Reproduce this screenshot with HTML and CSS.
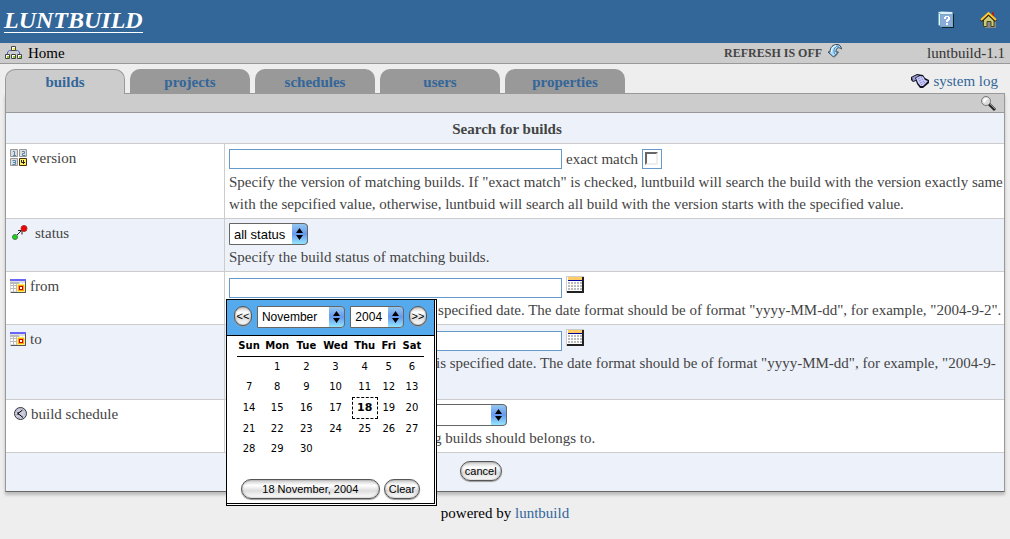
FILE: index.html
```html
<!DOCTYPE html>
<html lang="en">
<head>
<meta charset="utf-8">
<title>Luntbuild - Search for builds</title>
<link rel="stylesheet" href="styles.css">
</head>
<body>
<svg class="defs" aria-hidden="true">
  <symbol id="grid-cal" viewBox="0 0 16 14">
    <path fill="#ddd" d="M0 0h16v14H0z"/>
    <path fill="#fff" d="M1 4h2v2H1zM4 4h2v2H4zM7 4h2v2H7zM10 4h2v2h-2zM1 7h2v2H1zM4 7h2v2H4zM7 7h2v2H7zM1 10h2v2H1zM4 10h2v2H4zM13 4h2v2h-2z"/>
    <path fill="#bbb" d="M0 3h9v2H0zM3 5h1v8H3zM6 5h1v8H6zM0 6h6v1H0zM0 9h6v1H0zM0 13h16v1H0z"/>
    <path fill="#66f" d="M0 0h16v2H0z"/>
    <path fill="#555" d="M15 2h1v12h-1zM1 13h14v1H1z"/>
    <path fill="#fe6" d="M8 5h6l1 1v6l-1 1H8l-1-1V6z"/>
    <path fill="#fa0" d="M8 6h6v6H8z"/>
    <path fill="#c00" d="M9 7h4v4H9z"/>
    <path fill="#fff" d="M10 8h2v2h-2z"/>
  </symbol>
  <symbol id="picker-cal" viewBox="0 0 18 17">
    <path fill="#ccc" d="M0 0h18v17H0z"/>
    <path fill="#fff" d="M1 1h15v14H1z"/>
    <path fill="#fc6" d="M2 1h14v3H2z"/>
    <path fill="#009" d="M2 4h14v1H2z"/>
    <path fill="none" stroke="#bbb" stroke-width="2" stroke-dasharray="2 1" d="M2 7h14M2 10h14M2 13h14"/>
    <path fill="#222" d="M16 1h2v16H1v-2h15z"/>
  </symbol>
</svg>

<header class="banner">
  <a class="brand" href="#">LUNTBUILD</a>
  <nav class="banner-links">
    <a href="#" aria-label="Help">
      <svg width="18" height="18" viewBox="0 0 18 18">
        <path fill="#123" d="M15 3h2v14H5v-1h10z"/>
        <path fill="#7ab" d="M1 1l4-1 11 1v15H4l-3-2z"/>
        <path fill="#def" d="M2 1h13v2H4L2 2z"/>
        <path fill="#dff" d="M2 3h1v11H2z"/>
        <path fill="#8ad" d="M4 4h11v11H4z"/>
        <path fill="#fff" d="M7 6h1V5h4v1h1v3h-1v1h-1v1H9V9h1V8h1V6H9v2H7zM9 12h2v2H9z"/>
      </svg>
    </a>
    <a href="#" aria-label="Home page">
      <svg width="18" height="18" viewBox="0 0 18 18">
        <path fill="#888" d="M5 9h11v8H5z"/>
        <path fill="#a22" d="M12 1h2v5h-2z"/>
        <path fill="#cc7" stroke="#442" d="M3.500 8.500L8.500 4l5.500 4.500v7h-3v-5H7v5H3.500z"/>
        <path fill="none" stroke="#321" stroke-width="3" d="M1 10L8.500 3 16 10"/>
        <path fill="none" stroke="#fc3" stroke-width="2" d="M1 9L8.500 2 16 9"/>
      </svg>
    </a>
  </nav>
</header>

<div class="crumbs">
  <a class="crumb-home" href="#">
    <svg width="18" height="14" viewBox="0 0 18 14">
      <path fill="none" stroke="#46c" d="M2.500 8V6l2-1.500h8l2 1.500v2"/>
      <path fill="#fff" stroke="#444" d="M6.500 .500h4v4h-4zM.500 8.500h4v4h-4zM6.500 8.500h4v4h-4zM12.500 8.500h4v4h-4z"/>
      <path fill="#ee3" d="M8 2h2v2H8z"/>
      <path fill="#8c2" d="M2 10h2v2H2zM8 10h2v2H8zM14 10h2v2h-2z"/>
    </svg>
    Home
  </a>
  <a class="refresh" href="#">REFRESH IS OFF
    <svg width="16" height="16" viewBox="0 0 16 16">
      <path fill="#777" d="M7 14l4-4-2-2z"/>
      <path fill="#adf" stroke="#345" d="M1 8h2C3 3 6 .500 10 .500c3 0 4 2 4.500 4.500C12 3 9 3 9 8h2.500L6.500 13z"/>
      <path fill="none" stroke="#48b" d="M7.500 10C6 5 8 2 12 2"/>
      <path fill="none" stroke="#fff" d="M4.500 8c0-4 2-6 4.500-6"/>
    </svg>
  </a>
  <span class="release">luntbuild-1.1</span>
</div>

<main class="page">
  <div class="tab-row">
    <nav class="tabs">
      <a class="tab tab-active" href="#">builds</a>
      <a class="tab" href="#">projects</a>
      <a class="tab" href="#">schedules</a>
      <a class="tab" href="#">users</a>
      <a class="tab" href="#">properties</a>
    </nav>
    <a class="syslog" href="#">
      <svg width="18" height="15" viewBox="0 0 18 15">
        <path fill="#112" d="M0 3l6-3 6 1 2 3 4 2v3l-6 5H9l-3-4-1-3-3 1-2-2z"/>
        <path fill="#99c" d="M1 3.500L6 1l2 .500L4 4l1 2-3 1z"/>
        <path fill="#ccf" d="M5 4l4-2 3 .500L14 6l3 1-5 5H9.500L7 9z"/>
        <path fill="none" stroke="#88b" stroke-dasharray="2 1" d="M7 5l4-2M8 7l4-2M9 9l4-2M10 11l4-3"/>
      </svg>
      system log
    </a>
  </div>

  <section class="panel">
    <div class="toolbar">
      <button class="icon-button" type="button" aria-label="Search">
        <svg width="18" height="17" viewBox="0 0 18 17">
          <path stroke="#222" stroke-width="3" d="M9 9l6 6"/>
          <path stroke="#999" d="M10 9l5 5"/>
          <circle cx="6" cy="6" r="4.500" fill="#ddd" stroke="#777"/>
          <path fill="#fff" d="M3 5l2-2h3L6 6 4 8z"/>
        </svg>
      </button>
    </div>

    <form class="search">
      <table class="criteria">
        <colgroup><col class="names"><col></colgroup>
        <thead>
          <tr class="shade"><th colspan="2">Search for builds</th></tr>
        </thead>
        <tbody>
          <tr>
            <td>
              <label class="name" for="version">
                <svg width="18" height="18" viewBox="0 0 18 18">
                  <path fill="#ddd" stroke="#999" d="M.500 .500h7v7h-7zM9.500 .500h7v7h-7zM.500 9.500h7v7h-7z"/>
                  <path fill="#fe6" stroke="#431" d="M9.500 9.500h7v7h-7z"/>
                  <path fill="none" stroke="#58a" d="M3 2.500h1.500V6M3 6.500h3M12 2.500h2.500v2h-2v2h3M2.500 11.500h3v4h-3M3 13.500h2"/>
                  <path fill="none" stroke="#220" d="M11.500 11v2.500H15M13.500 11v4"/>
                </svg>
                version
              </label>
            </td>
            <td>
              <div class="field">
                <input class="text" id="version" type="text">
                <label for="exact">exact match</label>
                <span class="check"><input id="exact" type="checkbox"></span>
              </div>
              <p>Specify the version of matching builds. If "exact match" is checked, luntbuild will search the build with the version exactly same with the sepcified value, otherwise, luntbuid will search all build with the version starts with the specified value.</p>
            </td>
          </tr>
          <tr class="shade">
            <td>
              <label class="name" for="status">
                <svg width="21" height="18" viewBox="0 0 21 18">
                  <path fill="none" stroke="#222" d="M7 11l5-5M8 6.500h4v4"/>
                  <circle cx="5" cy="13" r="2.500" fill="#1d1" stroke="#575"/>
                  <circle cx="14" cy="4.500" r="3" fill="#e00" stroke="#a33"/>
                </svg>
                status
              </label>
            </td>
            <td>
              <div class="field">
                <select class="drop" id="status"><option>all status</option></select>
              </div>
              <p>Specify the build status of matching builds.</p>
            </td>
          </tr>
          <tr>
            <td>
              <label class="name" for="from">
                <svg width="16" height="14"><use href="#grid-cal"/></svg>
                from
              </label>
            </td>
            <td>
              <div class="field field-date">
                <input class="text" id="from" type="text">
                <button class="icon-button" type="button" aria-label="Pick start date"><svg width="18" height="17"><use href="#picker-cal"/></svg></button>
                <div class="calendar">
                  <div class="calendar-body">
                    <div class="calendar-head">
                      <button class="pill pill-round" type="button">&lt;&lt;</button>
                      <select class="drop drop-month" aria-label="Month"><option>November</option></select>
                      <select class="drop drop-year" aria-label="Year"><option>2004</option></select>
                      <button class="pill pill-round" type="button">&gt;&gt;</button>
                    </div>
                    <table class="days">
                      <colgroup><col class="c24"><col class="c32"><col class="c26"><col class="c32"><col class="c26"><col class="c22"><col class="c24"></colgroup>
                      <thead><tr><th>Sun</th><th>Mon</th><th>Tue</th><th>Wed</th><th>Thu</th><th>Fri</th><th>Sat</th></tr></thead>
                      <tbody>
                        <tr><td></td><td>1</td><td>2</td><td>3</td><td>4</td><td>5</td><td>6</td></tr>
                        <tr><td>7</td><td>8</td><td>9</td><td>10</td><td>11</td><td>12</td><td>13</td></tr>
                        <tr><td>14</td><td>15</td><td>16</td><td>17</td><td class="today">18</td><td>19</td><td>20</td></tr>
                        <tr><td>21</td><td>22</td><td>23</td><td>24</td><td>25</td><td>26</td><td>27</td></tr>
                        <tr><td>28</td><td>29</td><td>30</td><td></td><td></td><td></td><td></td></tr>
                        <tr><td></td><td></td><td></td><td></td><td></td><td></td><td></td></tr>
                      </tbody>
                    </table>
                    <div class="calendar-foot">
                      <button class="pill pill-wide" type="button">18 November, 2004</button>
                      <button class="pill" type="button">Clear</button>
                    </div>
                  </div>
                </div>
              </div>
              <p>Search the builds created from the specified date. The date format should be of format "yyyy-MM-dd", for example, "2004-9-2".</p>
            </td>
          </tr>
          <tr class="shade">
            <td>
              <label class="name" for="to">
                <svg width="16" height="14"><use href="#grid-cal"/></svg>
                to
              </label>
            </td>
            <td>
              <div class="field field-date">
                <input class="text" id="to" type="text">
                <button class="icon-button" type="button" aria-label="Pick end date"><svg width="18" height="17"><use href="#picker-cal"/></svg></button>
              </div>
              <p>Search the builds executed until this specified date. The date format should be of format "yyyy-MM-dd", for example, "2004-9-<wbr>2".</p>
            </td>
          </tr>
          <tr>
            <td>
              <label class="name" for="schedule">
                <svg width="17" height="16" viewBox="0 0 17 16">
                  <circle cx="10.500" cy="7.500" r="6" fill="#ccd" stroke="#333"/>
                  <circle cx="10.500" cy="7.500" r="4.500" fill="none" stroke="#88c" stroke-dasharray="1 3"/>
                  <path fill="none" stroke="#000" d="M8 7.500L12.500 4M8 7.500l5 4M8 6v3"/>
                </svg>
                build schedule
              </label>
            </td>
            <td>
              <div class="field">
                <select class="drop drop-schedule" id="schedule"><option></option></select>
              </div>
              <p>Specify a schedule which matching builds should belongs to.</p>
            </td>
          </tr>
          <tr class="shade">
            <td class="actions" colspan="2">
              <button class="pill" type="submit">search</button>
              <button class="pill" type="button">cancel</button>
            </td>
          </tr>
        </tbody>
      </table>
    </form>
  </section>
</main>

<footer class="footer">powered by <a href="#">luntbuild</a></footer>
</body>
</html>
```
FILE: styles.css
```css
* { box-sizing: border-box; }

body {
  margin: 0;
  background: #eee;
  color: #000;
  font: 15px/22px "Liberation Serif", "Times New Roman", serif;
}

a { color: #369; text-decoration: none; }
svg { display: block; flex: none; }
.defs { position: absolute; width: 0; height: 0; }

.banner {
  display: flex;
  align-items: center;
  justify-content: space-between;
  height: 43px;
  padding: 0 12px 3px 4px;
  background: #369;
}
.brand {
  color: #fff;
  font: italic bold 24px/24px "Liberation Serif", serif;
  border-bottom: 1px solid #fff;
}
.banner-links { display: flex; gap: 25px; }

.crumbs {
  display: flex;
  align-items: center;
  height: 21px;
  padding: 0 5px;
  background: #ccc;
  border-bottom: 1px solid #999;
}
.crumb-home { display: flex; align-items: center; gap: 5px; color: #000; }
.refresh {
  display: flex;
  align-items: center;
  gap: 5px;
  margin-left: auto;
  color: #444;
  font-size: 12px;
  font-weight: bold;
}
.refresh svg { margin-bottom: 2px; }
.release { margin-left: 84px; color: #333; }

.page { padding: 5px 5px 0; }
.tab-row { display: flex; justify-content: space-between; }
.tabs { display: flex; gap: 5px; margin-bottom: -1px; }
.tab {
  width: 120px;
  height: 25px;
  padding-top: 2px;
  border-radius: 10px 10px 0 0;
  background: #999;
  font-weight: bold;
  text-align: center;
}
.tab-active {
  position: relative;
  padding-top: 1px;
  background: #ccc;
  border: 1px solid #999;
  border-bottom: 0;
}
.syslog { display: flex; align-items: center; gap: 4px; padding-right: 7px; }

.panel {
  border: 1px solid #999;
  border-bottom-color: #666;
  box-shadow: 0 3px 3px #bbb;
}
.toolbar {
  display: flex;
  justify-content: flex-end;
  align-items: center;
  height: 19px;
  padding-right: 6px;
  background: #ccc;
  border-bottom: 1px solid #999;
}
.icon-button { display: block; padding: 0; border: 0; background: none; }

.criteria {
  width: 100%;
  border-collapse: separate;
  border-spacing: 0;
  table-layout: fixed;
  background: #fff;
  color: #444;
}
.names { width: 219px; }
.criteria > thead th { height: 31px; padding: 2px 0 0 4px; border-bottom: 1px solid #ccc; }
.criteria > tbody > tr > td {
  padding: 4px 0 3px 4px;
  border-bottom: 1px solid #ccc;
  vertical-align: top;
}
.criteria > tbody > tr > td:first-child { border-right: 1px solid #ccc; }
.shade { background: #edf2fa; }
.criteria p { margin: 0; }

.name { display: flex; align-items: center; gap: 4px; height: 20px; }
.field {
  position: relative;
  display: flex;
  align-items: center;
  gap: 4px;
  height: 22px;
  margin-bottom: 1px;
}
.field-date { align-items: flex-end; }
.field-date .icon-button { align-self: flex-start; }

.text {
  width: 333px;
  height: 20px;
  padding: 0 3px;
  border: 1px solid #69c;
  background: #fff;
}
.check {
  width: 20px;
  height: 20px;
  padding: 2px;
  border: 1px solid #69c;
  background: #fff;
}
.check input {
  appearance: none;
  display: block;
  width: 13px;
  height: 13px;
  margin: 0;
  border: 2px solid #eee;
  border-top-color: #666;
  border-left-color: #666;
}

.drop {
  appearance: none;
  height: 22px;
  padding: 0 20px 0 4px;
  width: 79px;
  border: 1px solid #666;
  border-radius: 0 4px 4px 0;
  background: #fff url("data:image/svg+xml,%3Csvg xmlns='http://www.w3.org/2000/svg' width='16' height='22'%3E%3Cdefs%3E%3ClinearGradient id='g' x2='0' y2='1'%3E%3Cstop stop-color='%239ce'/%3E%3Cstop offset='.5' stop-color='%2369e'/%3E%3Cstop offset='1' stop-color='%239ef'/%3E%3C/linearGradient%3E%3C/defs%3E%3Cpath fill='url(%23g)' d='M0 0h16v22H0z'/%3E%3Cpath stroke='%23119' d='M0 .5h16M15.500 0v22'/%3E%3Cpath d='M4 10l3.500-5L11 10zM4 12l3.500 5L11 12z'/%3E%3C/svg%3E") right center no-repeat;
  background-origin: border-box;
  color: #000;
  font: 13px "Liberation Sans", Arial, sans-serif;
}
.drop-schedule { width: 278px; }

.pill {
  height: 20px;
  padding: 0 4px;
  border: 1px solid #555;
  border-radius: 10px;
  background: linear-gradient(#ccc, #fff 30%, #ddd 60%, #fff);
  box-shadow: 0 1px 1px #999, inset 0 0 2px #888;
  color: #000;
  font: 11px "Liberation Sans", Arial, sans-serif;
}
.pill-wide { width: 139px; }
.pill-round { width: 18px; padding: 0; }

.calendar {
  position: absolute;
  z-index: 1;
  top: 23px;
  left: -3px;
  width: 211px;
  padding: 0 1px 1px 0;
  border: 1px solid #000;
  background: #fff;
  color: #000;
}
.calendar-body { border: solid #000; border-width: 0 1px 1px 0; }
.calendar-head {
  display: flex;
  gap: 5px;
  height: 36px;
  padding: 6px 7px 0;
  background: #5ae;
  border-bottom: 1px solid #000;
}
.drop-month, .drop-year { padding-right: 16px; font-size: 12px; }
.drop-month { width: 89px; }
.drop-year { width: 54px; }
.days {
  width: 187px;
  margin: 0 10px;
  border-collapse: separate;
  border-spacing: 0;
  table-layout: fixed;
  font: 10px/12px "DejaVu Sans", Verdana, sans-serif;
  text-align: center;
}
.days th { height: 21px; padding: 0; border-bottom: 1px solid #000; }
.days td { height: 20px; padding: 0; }
.days .today { height: 22px; border: 1px dashed #000; font-size: 11px; font-weight: bold; }
.c22 { width: 22px; }
.c24 { width: 24px; }
.c26 { width: 26px; }
.c32 { width: 32px; }
.calendar-foot { display: flex; justify-content: center; gap: 4px; height: 24px; }

.criteria > tbody > tr > td.actions {
  height: 38px;
  padding: 8px 0 0 383px;
  border: 0;
  line-height: 20px;
}
.actions .pill { margin-right: 24px; vertical-align: top; }

.footer { padding-top: 10px; text-align: center; }
```
